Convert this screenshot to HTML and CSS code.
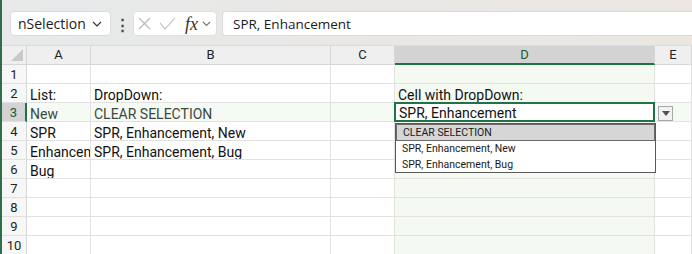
FILE: index.html
```html
<!DOCTYPE html>
<html lang="en">
<head>
  <meta charset="UTF-8" />
  <title>Cell with DropDown</title>
  <link rel="stylesheet" href="styles.css">
</head>
<body>
  <div class="app">
    <div class="toolbar">
      <div class="name-box">
        <span>nSelection</span>
        <svg class="chev" width="10" height="6" viewBox="0 0 10 6"><path d="M1 1l4 4 4-4" fill="none" stroke="#333" stroke-width="1.2"/></svg>
      </div>
      <div class="dots">⋮</div>
      <div class="fx-group">
        <svg width="13" height="13" viewBox="0 0 13 13"><path d="M1 1l11 11M12 1L1 12" stroke="#b8b8b8" stroke-width="1.1"/></svg>
        <svg width="17" height="13" viewBox="0 0 17 13"><path d="M1 6l5 6L16 1" fill="none" stroke="#b8b8b8" stroke-width="1.1"/></svg>
        <span class="fx">fx</span>
        <svg class="chev" width="9" height="6" viewBox="0 0 9 6"><path d="M1 1l3.5 3.5L8 1" fill="none" stroke="#777" stroke-width="1.1"/></svg>
      </div>
      <div class="formula">SPR, Enhancement</div>
    </div>

    <div class="sheet">
      <div class="grid">
        <div class="corner"><span class="tri"></span></div>
        <div class="colh">A</div>
        <div class="colh">B</div>
        <div class="colh">C</div>
        <div class="colh sel">D</div>
        <div class="colh">E</div>

        <div class="rowh">1</div><div class="c"></div><div class="c"></div><div class="c"></div><div class="c d"></div><div class="c"></div>
        <div class="rowh">2</div><div class="c">List:</div><div class="c">DropDown:</div><div class="c"></div><div class="c d">Cell with DropDown:</div><div class="c"></div>
        <div class="rowh sel">3</div><div class="c r3">New</div><div class="c r3">CLEAR SELECTION</div><div class="c r3"></div><div class="c active">SPR, Enhancement</div><div class="c r3"></div>
        <div class="rowh">4</div><div class="c">SPR</div><div class="c">SPR, Enhancement, New</div><div class="c"></div><div class="c d"></div><div class="c"></div>
        <div class="rowh">5</div><div class="c clip">Enhancement</div><div class="c">SPR, Enhancement, Bug</div><div class="c"></div><div class="c d"></div><div class="c"></div>
        <div class="rowh">6</div><div class="c">Bug</div><div class="c"></div><div class="c"></div><div class="c d"></div><div class="c"></div>
        <div class="rowh">7</div><div class="c"></div><div class="c"></div><div class="c"></div><div class="c d"></div><div class="c"></div>
        <div class="rowh">8</div><div class="c"></div><div class="c"></div><div class="c"></div><div class="c d"></div><div class="c"></div>
        <div class="rowh">9</div><div class="c"></div><div class="c"></div><div class="c"></div><div class="c d"></div><div class="c"></div>
        <div class="rowh">10</div><div class="c"></div><div class="c"></div><div class="c"></div><div class="c d"></div><div class="c"></div>
      </div>

      <div class="dd-btn">
        <svg width="8" height="5" viewBox="0 0 8 5"><path d="M0 0h8L4 5z" fill="#555"/></svg>
      </div>
      <ul class="dd-list">
        <li class="hl">CLEAR SELECTION</li>
        <li>SPR, Enhancement, New</li>
        <li>SPR, Enhancement, Bug</li>
      </ul>
    </div>
  </div>
</body>
</html>
```

FILE: styles.css
```css
* {
  margin: 0;
  padding: 0;
  box-sizing: border-box;
}
body {
  width: 692px;
  height: 254px;
  overflow: hidden;
  background: #fff;
  font-family: "Open Sans", sans-serif;
  color: #1b1b1b;
}
.app {
  border-left: 2px solid #2f6e48;
  height: 254px;
}
.toolbar {
  height: 46px;
  display: flex;
  align-items: center;
  padding: 2px 0 0 8px;
  background: linear-gradient(90deg, #e7e9ea, #ebe6e2);
  border-bottom: 1px solid #dcdcdc;
}
.name-box {
  width: 101px;
  height: 25px;
  background: #fff;
  border: 1px solid #dcdcdc;
  border-radius: 4px;
  display: flex;
  align-items: center;
  justify-content: space-between;
  padding: 0 8px 0 7px;
  font-size: 14px;
}
.dots {
  width: 22px;
  text-align: center;
  font-size: 15px;
  font-weight: bold;
  color: #444;
}
.fx-group {
  width: 84px;
  height: 25px;
  background: #fff;
  border: 1px solid #e0e0e0;
  border-radius: 4px;
  display: flex;
  align-items: center;
  gap: 8px;
  padding: 0 0 0 4px;
}
.fx {
  font-family: "Liberation Serif", serif;
  font-style: italic;
  font-size: 18px;
  line-height: 18px;
  color: #333;
  margin-left: 1px;
}
.fx-group .chev {
  margin-left: -4px;
}
.formula {
  flex: 1;
  height: 25px;
  margin-left: 5px;
  background: #fff;
  border: 1px solid #dcdcdc;
  border-right: none;
  border-radius: 4px 0 0 4px;
  padding: 0 10px;
  display: flex;
  align-items: center;
  font-size: 13.5px;
}
.sheet {
  position: relative;
}
.grid {
  display: grid;
  grid-template-columns: 25px 64px 240px 64px 260px 1fr;
  grid-template-rows: 19px repeat(10, 19px);
  font-family: Roboto, sans-serif;
}
.corner, .colh {
  background: #efefef;
  border-right: 1px solid #d6d6d6;
  border-bottom: 1px solid #d6d6d6;
}
.corner {
  position: relative;
}
.tri {
  position: absolute;
  right: 3px;
  bottom: 3px;
  border-left: 12px solid transparent;
  border-bottom: 12px solid #c9c9c9;
}
.colh {
  font-size: 13px;
  text-align: center;
  line-height: 18px;
  color: #222;
}
.colh.sel {
  background: #d3d3d3;
  border-bottom: 2px solid #217346;
  color: #1d5a36;
}
.rowh {
  background: #f7f7f7;
  border-right: 1px solid #d6d6d6;
  border-bottom: 1px solid #e1e1e1;
  font-size: 13px;
  text-align: center;
  line-height: 19px;
  color: #222;
}
.rowh.sel {
  background: #d3d3d3;
  border-right: 2px solid #217346;
  color: #1d5a36;
}
.c {
  border-right: 1px solid #e1e1e1;
  border-bottom: 1px solid #e1e1e1;
  font-size: 14px;
  line-height: 18px;
  padding: 2px 0 0 3px;
  white-space: nowrap;
  overflow: hidden;
  color: #111;
}
.c.d {
  background: #f4f9f2;
}
.c.r3 {
  background: #f6faf4;
  color: #3a4a3c;
}
.c.active {
  border: 2px solid #217346;
  margin: -1px 0 0 -1px;
  padding: 1px 0 0 3px;
  line-height: 17px;
  background: #fff;
}
.dd-btn {
  position: absolute;
  left: 656px;
  top: 60px;
  width: 15px;
  height: 15px;
  border: 1px solid #a8a8a8;
  background: #f2f2f2;
  display: flex;
  align-items: center;
  justify-content: center;
}
.dd-list {
  position: absolute;
  left: 393px;
  top: 77px;
  width: 261px;
  height: 50px;
  list-style: none;
  background: #fff;
  border: 1px solid #5a5a5a;
  font-family: Roboto, sans-serif;
  font-size: 10.5px;
  color: #1a1a1a;
}
.dd-list li {
  height: 16px;
  line-height: 15px;
  padding-left: 6px;
}
.dd-list li.hl {
  background: #d6d6d6;
  border: 1px solid #6a6a6a;
  height: 17px;
}
```
